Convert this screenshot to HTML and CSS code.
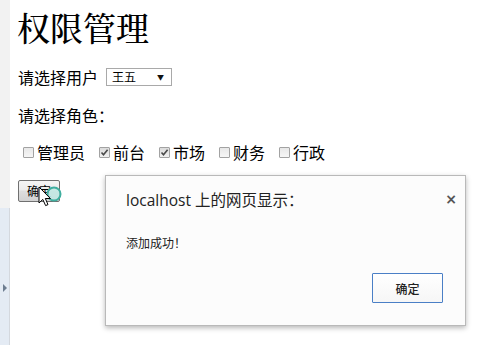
FILE: index.html
```html
<!DOCTYPE html>
<html lang="zh-CN">
<head>
<meta charset="utf-8">
<title>权限管理</title>
<link rel="stylesheet" href="styles.css">
</head>
<body>
<div class="page">
  <aside class="side">
    <div class="side-top"></div>
    <div class="side-bottom"><span class="side-arrow"></span></div>
  </aside>
  <main class="main">
    <h1 class="title">权限管理</h1>
    <div class="row">
      <span>请选择用户</span>
      <div class="select"><span>王五</span><span class="select-arrow">▼</span></div>
    </div>
    <div class="row">请选择角色：</div>
    <div class="row roles">
      <label class="role"><span class="cb"></span>管理员</label>
      <label class="role"><span class="cb checked"><svg viewBox="0 0 9 9" width="9" height="9"><path d="M1.5 4.5 L3.5 6.8 L7.6 1.8" fill="none" stroke="#4a4a4a" stroke-width="1.6"/></svg></span>前台</label>
      <label class="role"><span class="cb checked"><svg viewBox="0 0 9 9" width="9" height="9"><path d="M1.5 4.5 L3.5 6.8 L7.6 1.8" fill="none" stroke="#4a4a4a" stroke-width="1.6"/></svg></span>市场</label>
      <label class="role"><span class="cb"></span>财务</label>
      <label class="role"><span class="cb"></span>行政</label>
    </div>
    <div class="row">
      <button class="btn" type="button">确定</button>
    </div>
  </main>
</div>

<svg class="cursor" width="30" height="30" viewBox="0 0 30 30">
  <circle cx="16" cy="8" r="6.5" fill="#bfe9e3" fill-opacity="0.8" stroke="#3fae9f" stroke-width="2"/>
  <path d="M1 1 L1 17 L4.8 13.4 L7.6 19.6 L10 18.6 L7.3 12.5 L12.4 12.5 Z" fill="#fff" stroke="#000" stroke-width="1"/>
</svg>

<div class="dialog">
  <div class="dlg-head">
    <span class="dlg-title">localhost 上的网页显示：</span>
    <span class="dlg-close">×</span>
  </div>
  <div class="dlg-msg">添加成功！</div>
  <div class="dlg-foot"><button class="dlg-btn" type="button">确定</button></div>
</div>
</body>
</html>
```

FILE: styles.css
```css
html, body {
  margin: 0;
  padding: 0;
  background: #fff;
}
body {
  font-family: "Noto Sans CJK SC", "Noto Sans", sans-serif;
  color: #000;
  width: 494px;
  height: 345px;
  overflow: hidden;
  position: relative;
}
.page {
  display: flex;
  height: 345px;
}
.side {
  width: 10px;
  display: flex;
  flex-direction: column;
}
.side-top {
  height: 208px;
  background: #f2f2f2;
}
.side-bottom {
  flex: 1;
  background: #e4ebf4;
  border-right: 1px solid #d4d8de;
  display: flex;
  align-items: flex-start;
  justify-content: center;
  padding-top: 76px;
}
.side-arrow {
  width: 0;
  height: 0;
  border-top: 4px solid transparent;
  border-bottom: 4px solid transparent;
  border-left: 4px solid #6d7d90;
}
.main {
  padding-left: 8px;
  display: flex;
  flex-direction: column;
}
.title {
  font-family: "Noto Serif CJK SC", "Noto Sans CJK SC", serif;
  font-size: 33px;
  font-weight: 500;
  line-height: 40px;
  margin: 7px 0 0 -1px;
  letter-spacing: 0;
}
.row {
  font-size: 16px;
  line-height: 22px;
  height: 22px;
  display: flex;
  align-items: center;
  margin-top: 16px;
}
.title + .row {
  margin-top: 19px;
}
.select {
  margin-left: 8px;
  width: 59px;
  height: 16px;
  border: 1px solid #a9a9a9;
  display: flex;
  align-items: center;
  justify-content: space-between;
  padding: 0 0 0 5px;
  box-sizing: content-box;
  font-size: 12px;
  line-height: 16px;
}
.select-arrow {
  font-size: 7px;
  margin-right: 7px;
  color: #111;
}
.roles {
  margin-top: 15px;
}
.role {
  display: inline-flex;
  align-items: center;
  margin-right: 9px;
}
.cb {
  width: 9px;
  height: 9px;
  border: 1px solid #a2a2a2;
  border-radius: 1px;
  background: linear-gradient(#e8e8e8, #f6f6f6);
  margin: 0 3px 0 5px;
  display: inline-flex;
  align-items: center;
  justify-content: center;
}
.cb.checked {
  background: linear-gradient(#dcdcdc, #f0f0f0);
}
.cb svg {
  display: block;
}
.btn {
  font-family: "Noto Sans CJK SC", sans-serif;
  font-size: 12px;
  width: 42px;
  height: 22px;
  padding: 0;
  line-height: 20px;
  border: 1px solid #707070;
  border-radius: 2px;
  background: linear-gradient(#f4f4f4 0%, #ececec 45%, #dedede 50%, #d2d2d2 100%);
  color: #000;
  margin-top: 1px;
}
.cursor {
  position: absolute;
  left: 38px;
  top: 186px;
}
.dialog {
  position: absolute;
  left: 105px;
  top: 175px;
  width: 317px;
  height: 149px;
  background: #fcfcfc;
  border: 1px solid #b9b9b9;
  box-shadow: 0 2px 5px rgba(0, 0, 0, 0.28);
  display: flex;
  flex-direction: column;
  padding: 0 22px 0 20px;
  box-sizing: content-box;
  font-family: "Open Sans", "Noto Sans CJK SC", sans-serif;
}
.dlg-head {
  display: flex;
  justify-content: space-between;
  align-items: flex-start;
  margin-top: 13px;
  height: 22px;
}
.dlg-title {
  font-size: 15.5px;
  line-height: 22px;
  color: #222;
}
.dlg-close {
  font-family: "DejaVu Sans", sans-serif;
  font-size: 14px;
  line-height: 14px;
  font-weight: bold;
  color: #555;
  margin-right: -14px;
  margin-top: 3px;
}
.dlg-msg {
  font-family: "Noto Sans CJK SC", sans-serif;
  font-size: 12px;
  line-height: 17px;
  color: #222;
  margin-top: 23px;
}
.dlg-foot {
  display: flex;
  justify-content: flex-end;
  margin-top: 22px;
}
.dlg-btn {
  font-family: "Noto Sans CJK SC", sans-serif;
  font-size: 12px;
  font-weight: 500;
  width: 71px;
  height: 30px;
  border: 1px solid #4a7fc6;
  border-radius: 1px;
  background: linear-gradient(#ffffff, #f6f6f6);
  color: #222;
}
```
